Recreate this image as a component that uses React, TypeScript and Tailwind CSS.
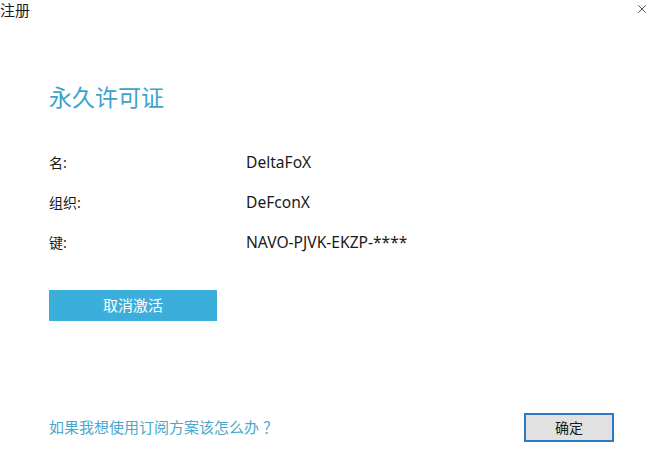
import { X } from "lucide-react";

const rows = [
  { label: "名:", value: "DeltaFoX" },
  { label: "组织:", value: "DeFconX" },
  { label: "键:", value: "NAVO-PJVK-EKZP-****" },
];

export default function App() {
  return (
    <div
      className="relative flex h-[462px] w-[653px] flex-col bg-white text-[#1a1a1a]"
      style={{ fontFamily: '"Noto Sans", "Noto Sans CJK SC", sans-serif' }}
    >
      <div className="flex h-[20px] items-start justify-between">
        <span className="text-[15px] leading-[20px]">注册</span>
        <X className="mr-[4px] mt-[2px] h-[14px] w-[14px] text-[#222]" strokeWidth={1.3} />
      </div>

      <div className="flex flex-1 flex-col pl-[49px]">
        <h1 className="mt-[62px] text-[23px] leading-[30px] text-[#3ba3cd]">永久许可证</h1>

        <div className="mt-[40px] flex flex-col gap-[19px]">
          {rows.map((r) => (
            <div key={r.label} className="flex h-[21px] items-center">
              <span className="w-[197px] text-[14px]">{r.label}</span>
              <span className="text-[15.6px]">{r.value}</span>
            </div>
          ))}
        </div>

        <button className="mt-[37px] h-[31px] w-[168px] bg-[#3caedb] text-[15px] text-white">
          取消激活
        </button>

        <div className="mt-auto mb-[20px] flex items-center justify-between pr-[39px]">
          <span className="text-[15px] text-[#4aa8cc]">
            如果我想使用订阅方案该怎么办<span className="ml-[4px]">？</span>
          </span>
          <button className="h-[29px] w-[90px] border-2 border-[#2a7ac6] bg-[#e1e1e1] text-[14px]">
            确定
          </button>
        </div>
      </div>
    </div>
  );
}
